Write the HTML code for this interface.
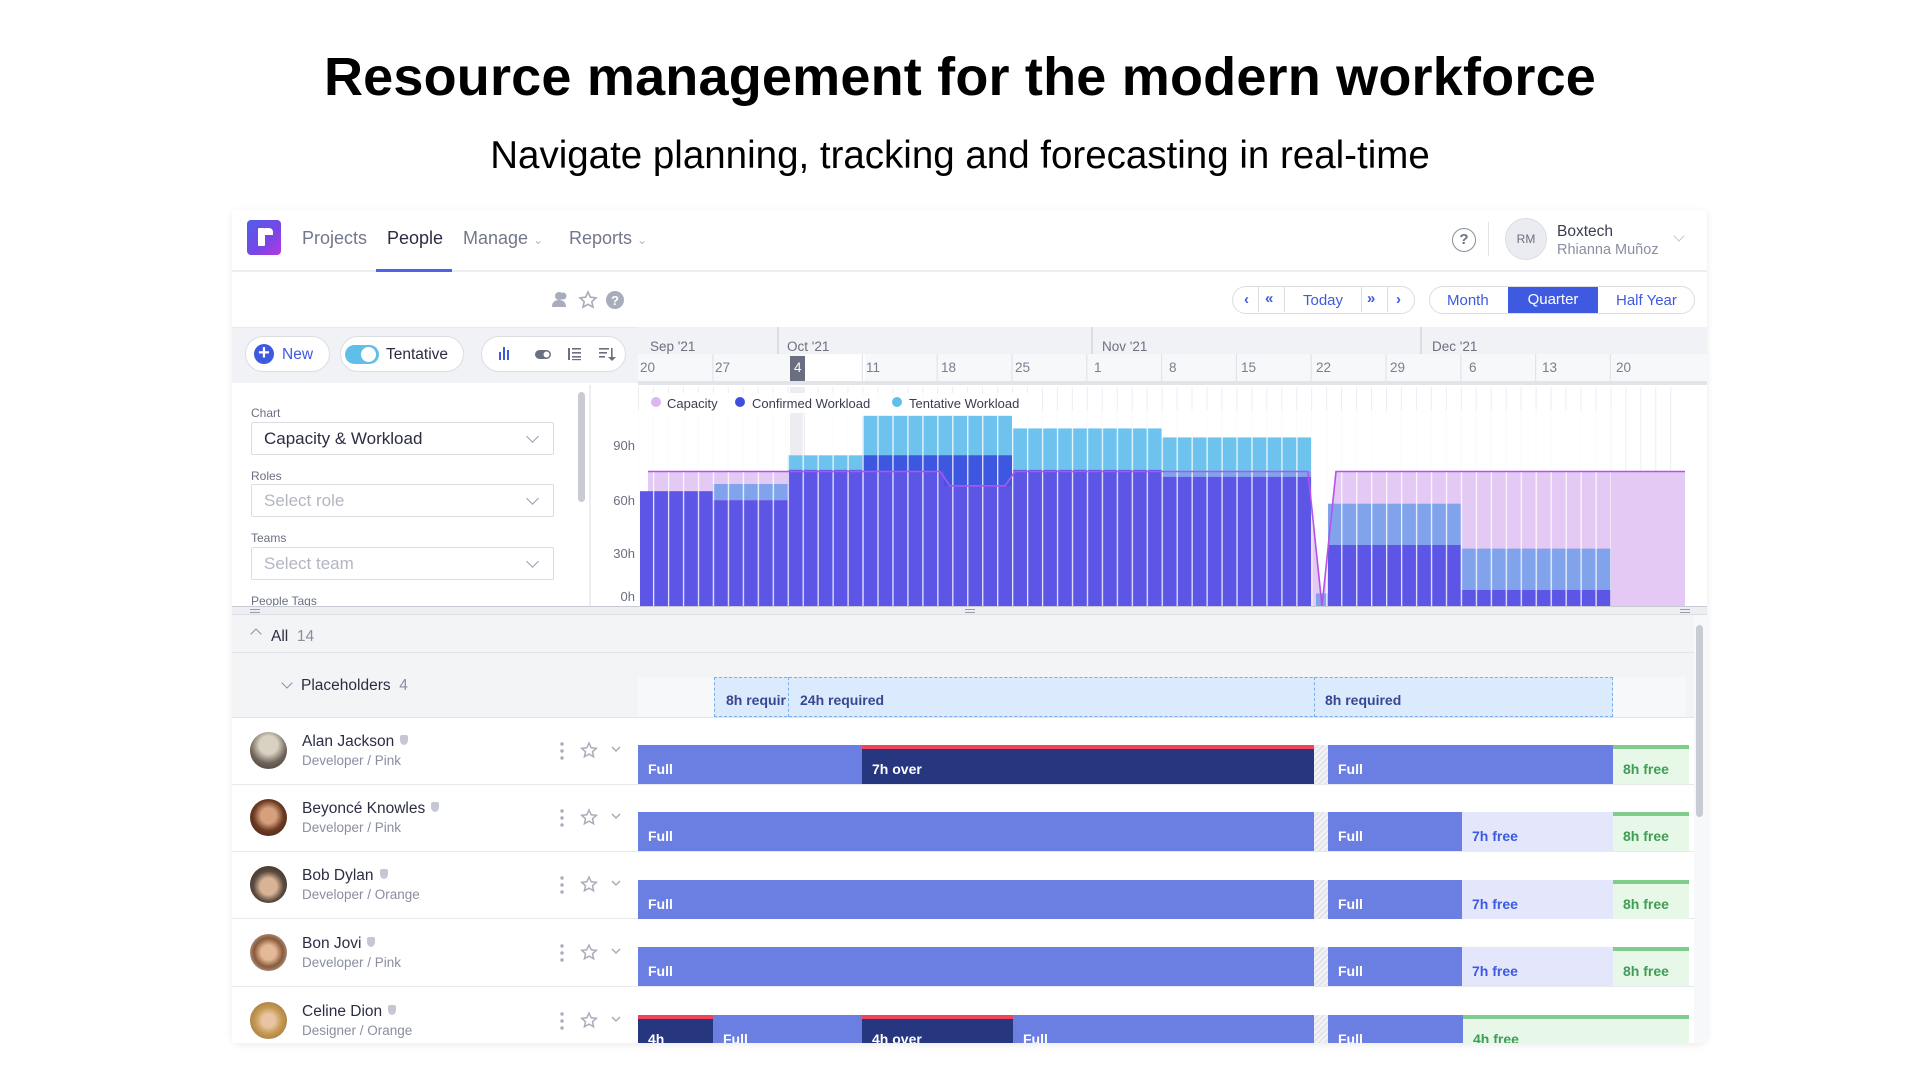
<!DOCTYPE html>
<html><head><meta charset="utf-8"><style>
*{box-sizing:border-box;margin:0;padding:0}
body{width:1920px;height:1080px;background:#fff;font-family:"Liberation Sans",sans-serif;position:relative;overflow:hidden;color:#2b2d42}
.a{position:absolute;white-space:nowrap}
.nav{font-size:18px;color:#737789;top:228px}
.sel{position:absolute;left:251px;width:303px;height:33px;border:1.5px solid #dcdde3;border-radius:2px;background:#fff;font-size:17px;padding:6px 12px;color:#2b2d42}
.sel.ph{color:#b3b6c2}
.sel:after{content:"";position:absolute;right:16px;top:9px;width:8px;height:8px;border-right:1.5px solid #9a9db0;border-bottom:1.5px solid #9a9db0;transform:rotate(45deg)}
.lbl{font-size:12px;color:#6b6f80}
.wk{font-size:13.5px;color:#7a7e90;top:360px}
.mo{font-size:13.5px;color:#6b6f80;top:339px}
.row{position:absolute;left:232px;width:1462px;height:67px;background:#fff;border-bottom:1.5px solid #e8e9ee}
.bar{position:absolute;height:39px;font-size:14px;font-weight:bold;color:#fff;padding:16px 0 0 10px;overflow:hidden}
.f{background:#6b7fe3}
.o{background:#27377f;border-top:4px solid #ef4459;padding-top:12px}
.fr{background:#e4e6fb;color:#3d5ae0}
.g{background:#e7f7e8;color:#3f9e55;border-top:4px solid #7fcc8d;padding-top:12px}
.hatch{background:repeating-linear-gradient(135deg,#f4f4f8 0 2px,#e3e4ea 2px 4px)}
.nm{font-size:15.5px;color:#2b2d42}
.rl{font-size:13.5px;color:#8a8ea0}
.av{position:absolute;left:18px;top:14px;width:37px;height:37px;border-radius:50%}
.tag{display:inline-block;width:8px;height:10px;background:#c5c8d4;border-radius:2px 2px 50% 50%;margin-left:6px;vertical-align:1px}
</style></head><body>

<div class="a" style="left:0;width:1920px;text-align:center;top:46px;font-size:54px;font-weight:bold;color:#000;letter-spacing:0.2px">Resource management for the modern workforce</div>
<div class="a" style="left:0;width:1920px;text-align:center;top:134px;font-size:38.5px;color:#000">Navigate planning, tracking and forecasting in real-time</div>

<div class="a" style="left:232px;top:210px;width:1475px;height:833px;background:#fff;border-radius:0 0 8px 8px;box-shadow:0 2px 8px rgba(0,0,0,.08);overflow:hidden"></div>

<div class="a" style="left:247px;top:220px;width:34px;height:35px;border-radius:4px;background:linear-gradient(135deg,#4f5fe8,#7a45e6 60%,#b33be0)"></div>
<div class="a" style="left:258px;top:228px;width:7px;height:18px;background:#fff;border-radius:1px"></div>
<div class="a" style="left:265px;top:228px;width:8px;height:7px;background:#fff;border-radius:0 4px 0 0"></div>
<div class="a nav" style="left:302px">Projects</div>
<div class="a nav" style="left:387px;color:#2b2d42">People</div>
<div class="a nav" style="left:463px">Manage <span style="font-size:12px;color:#b3b6c2">&#8964;</span></div>
<div class="a nav" style="left:569px">Reports <span style="font-size:12px;color:#b3b6c2">&#8964;</span></div>
<div class="a" style="left:232px;top:270px;width:1475px;height:2px;background:#eceef2"></div>
<div class="a" style="left:376px;top:269px;width:76px;height:3px;background:#4f63e6"></div>
<div class="a" style="left:1452px;top:228px;width:24px;height:24px;border:1.8px solid #8a8ea0;border-radius:50%;font-size:15px;color:#6b6f80;text-align:center;line-height:21px;font-weight:bold">?</div>
<div class="a" style="left:1488px;top:222px;width:1px;height:34px;background:#e3e4ea"></div>
<div class="a" style="left:1505px;top:218px;width:42px;height:42px;border-radius:50%;background:#ebecf1;border:1px solid #dcdde3;font-size:12px;color:#6b6f80;text-align:center;line-height:40px">RM</div>
<div class="a" style="left:1557px;top:223px;font-size:15.5px;color:#3a3d50">Boxtech</div>
<div class="a" style="left:1557px;top:242px;font-size:14.5px;color:#8a8ea0">Rhianna Muñoz</div>
<div class="a" style="left:1675px;top:232px;width:8px;height:8px;border-right:1.5px solid #c5c8d4;border-bottom:1.5px solid #c5c8d4;transform:rotate(45deg)"></div>

<svg class="a" style="left:550px;top:290px" width="80" height="20" viewBox="0 0 80 20">
<circle cx="9" cy="6" r="4" fill="#a9acba"/><path d="M2 17c0-5 3-7 7-7s7 2 7 7z" fill="#a9acba"/><circle cx="13" cy="6" r="3.5" fill="#a9acba"/>
<path d="M38 2l2.4 5.2 5.6.6-4.2 3.8 1.2 5.6-5-2.9-5 2.9 1.2-5.6-4.2-3.8 5.6-.6z" fill="none" stroke="#a9acba" stroke-width="1.6"/>
<circle cx="65" cy="10" r="9" fill="#a9acba"/><text x="65" y="15" font-size="13" font-weight="bold" fill="#fff" text-anchor="middle" font-family="Liberation Sans">?</text>
</svg>
<div class="a" style="left:1232px;top:286px;width:183px;height:28px;border:1.5px solid #dcdde3;border-radius:14px;font-size:15px;color:#3d5ae0">
<span class="a" style="left:11px;top:4px;font-weight:bold">&#8249;</span>
<span class="a" style="left:25px;top:0;width:1px;height:25px;background:#dcdde3"></span>
<span class="a" style="left:32px;top:3px;font-weight:bold">&#171;</span>
<span class="a" style="left:51px;top:0;width:1px;height:25px;background:#dcdde3"></span>
<span class="a" style="left:70px;top:5px">Today</span>
<span class="a" style="left:128px;top:0;width:1px;height:25px;background:#dcdde3"></span>
<span class="a" style="left:134px;top:3px;font-weight:bold">&#187;</span>
<span class="a" style="left:154px;top:0;width:1px;height:25px;background:#dcdde3"></span>
<span class="a" style="left:163px;top:4px;font-weight:bold">&#8250;</span>
</div>
<div class="a" style="left:1429px;top:286px;width:266px;height:28px;border:1.5px solid #dcdde3;border-radius:14px;font-size:15px;color:#3d5ae0;overflow:hidden">
<span class="a" style="left:17px;top:5px">Month</span>
<span class="a" style="left:78px;top:-1px;width:90px;height:28px;background:#3d5ae0;color:#fff;text-align:center;line-height:28px">Quarter</span>
<span class="a" style="left:186px;top:5px">Half Year</span>
</div>

<div class="a" style="left:232px;top:327px;width:1475px;height:56px;background:#f1f2f5;border-top:1.5px solid #e8e9ee"></div>
<div class="a" style="left:245px;top:336px;width:85px;height:36px;border:1.5px solid #dcdde3;border-radius:18px;background:#fff;font-size:15.5px;color:#3d5ae0">
<span class="a" style="left:8px;top:7px;width:20px;height:20px;border-radius:50%;background:#3d5ae0;color:#fff;text-align:center;line-height:19px;font-size:20px;font-weight:bold">+</span>
<span class="a" style="left:36px;top:9px">New</span></div>
<div class="a" style="left:340px;top:336px;width:124px;height:36px;border:1.5px solid #dcdde3;border-radius:18px;background:#fff;font-size:15.5px;color:#2b2d42">
<span class="a" style="left:4px;top:8px;width:34px;height:19px;border-radius:10px;background:#5fbfe9"></span>
<span class="a" style="left:20px;top:10px;width:15px;height:15px;border-radius:50%;background:#fff"></span>
<span class="a" style="left:45px;top:9px">Tentative</span></div>
<div class="a" style="left:481px;top:336px;width:145px;height:36px;border:1.5px solid #dcdde3;border-radius:18px;background:#fff">
<svg class="a" style="left:16px;top:9px" width="120" height="16" viewBox="0 0 120 16">
<rect x="1" y="6" width="2" height="8" fill="#3d5ae0"/><rect x="5" y="1" width="2" height="13" fill="#3d5ae0"/><rect x="9" y="4" width="2" height="10" fill="#3d5ae0"/>
<rect x="37" y="4" width="16" height="9" rx="4.5" fill="#6b6f80"/><circle cx="48.5" cy="8.5" r="3" fill="#fff"/>
<g fill="#6b6f80"><rect x="70" y="2" width="2" height="12"/><rect x="74" y="2" width="9" height="1.6"/><rect x="74" y="6" width="9" height="1.6"/><rect x="74" y="10" width="9" height="1.6"/><rect x="74" y="13" width="9" height="1.2"/>
<rect x="101" y="2" width="10" height="1.6"/><rect x="101" y="6" width="8" height="1.6"/><rect x="101" y="10" width="6" height="1.6"/><rect x="113" y="2" width="1.6" height="12"/><path d="M110 11l4 4 4-4z"/></g>
</svg></div>

<div class="a" style="left:638px;top:327px;width:1069px;height:27px;background:#f1f2f5"></div>
<div class="a" style="left:638px;top:354px;width:1069px;height:27px;background:#f7f8fa"></div>
<div class="a" style="left:805px;top:354px;width:60px;height:27px;background:#fff"></div>
<div class="a" style="left:638px;top:381px;width:1069px;height:4px;background:#e3e4ea"></div>
<div class="a" style="left:777px;top:327px;width:1.5px;height:27px;background:#dcdde3"></div>
<div class="a" style="left:1091px;top:327px;width:1.5px;height:27px;background:#dcdde3"></div>
<div class="a" style="left:1420px;top:327px;width:1.5px;height:27px;background:#dcdde3"></div>
<div class="a mo" style="left:650px">Sep '21</div>
<div class="a mo" style="left:787px">Oct '21</div>
<div class="a mo" style="left:1102px">Nov '21</div>
<div class="a mo" style="left:1432px">Dec '21</div>
<div class="a" style="left:790px;top:356px;width:15px;height:25px;background:#6b6d80"></div>
<div class="a wk" style="left:640px">20</div><div class="a wk" style="left:715px">27</div><div class="a wk" style="left:794px;color:#fff">4</div><div class="a wk" style="left:866px">11</div><div class="a wk" style="left:941px">18</div><div class="a wk" style="left:1015px">25</div><div class="a wk" style="left:1094px">1</div><div class="a wk" style="left:1169px">8</div><div class="a wk" style="left:1241px">15</div><div class="a wk" style="left:1316px">22</div><div class="a wk" style="left:1390px">29</div><div class="a wk" style="left:1469px">6</div><div class="a wk" style="left:1542px">13</div><div class="a wk" style="left:1616px">20</div>
<svg class="a" style="left:0;top:354px" width="1707" height="27"><g stroke="#e3e4ea" stroke-width="1.2">
<line x1="712.8" y1="0" x2="712.8" y2="27"/><line x1="862.4" y1="0" x2="862.4" y2="27"/><line x1="937.2" y1="0" x2="937.2" y2="27"/><line x1="1012" y1="0" x2="1012" y2="27"/><line x1="1086.8" y1="0" x2="1086.8" y2="27"/><line x1="1161.6" y1="0" x2="1161.6" y2="27"/><line x1="1236.4" y1="0" x2="1236.4" y2="27"/><line x1="1311.2" y1="0" x2="1311.2" y2="27"/><line x1="1386" y1="0" x2="1386" y2="27"/><line x1="1460.8" y1="0" x2="1460.8" y2="27"/><line x1="1535.6" y1="0" x2="1535.6" y2="27"/><line x1="1610.4" y1="0" x2="1610.4" y2="27"/></g></svg>

<div class="a" style="left:232px;top:385px;width:359px;height:222px;background:#fff"></div>
<div class="a lbl" style="left:251px;top:406px">Chart</div>
<div class="sel" style="top:422px">Capacity &amp; Workload</div>
<div class="a lbl" style="left:251px;top:469px">Roles</div>
<div class="sel ph" style="top:484px">Select role</div>
<div class="a lbl" style="left:251px;top:531px">Teams</div>
<div class="sel ph" style="top:547px">Select team</div>
<div class="a lbl" style="left:251px;top:594px">People Tags</div>
<div class="a" style="left:578px;top:392px;width:7px;height:110px;border-radius:4px;background:#c9cbd4"></div>
<div class="a" style="left:589px;top:385px;width:2px;height:222px;background:#eceef2"></div>

<svg class="a" style="left:0;top:0" width="1707" height="615" viewBox="0 0 1707 615">
<defs>
<pattern id="gl" x="638" y="0" width="14.96" height="10" patternUnits="userSpaceOnUse"><rect x="0" y="0" width="1" height="10" fill="#ecedf2"/></pattern>
<pattern id="wl" x="638" y="0" width="14.96" height="10" patternUnits="userSpaceOnUse"><rect x="0" y="0" width="1.3" height="10" fill="#fff" opacity=".85"/></pattern>
</defs>
<rect x="591" y="385" width="1116" height="222" fill="#fff"/>
<rect x="638" y="387" width="1047" height="219" fill="url(#gl)"/>
<rect x="790" y="387" width="15" height="219" fill="#ececf1"/>
<polygon points="648,471.5 940,471.5 950,485.8 1005,485.8 1015,471.5 1308,471.5 1322,606 1336,471.5 1685,471.5 1685,606 648,606" fill="#e3c9f3"/>
<g>
<rect x="640" y="491.2" width="72.8" height="114.8" fill="#5c55e5"/>
<rect x="712.8" y="484" width="74.8" height="16.2" fill="#80a3ec"/><rect x="712.8" y="500.2" width="74.8" height="105.8" fill="#5c55e5"/>
<rect x="787.6" y="455.3" width="74.8" height="14.4" fill="#6ec3ee"/><rect x="787.6" y="469.7" width="74.8" height="136.3" fill="#5c55e5"/>
<rect x="862.4" y="415.8" width="149.6" height="39.5" fill="#6ec3ee"/><rect x="862.4" y="455.3" width="149.6" height="150.7" fill="#5c55e5"/>
<rect x="862.4" y="455.3" width="82" height="16.2" fill="#3e57e0"/><rect x="944" y="455.3" width="68" height="30.5" fill="#3e57e0"/>
<rect x="1012" y="428.4" width="149.6" height="41.3" fill="#6ec3ee"/><rect x="1012" y="469.7" width="149.6" height="136.3" fill="#5c55e5"/>
<rect x="1161.6" y="437.4" width="149.6" height="34.1" fill="#6ec3ee"/><rect x="1161.6" y="471.5" width="149.6" height="5.3" fill="#80a3ec"/><rect x="1161.6" y="476.8" width="149.6" height="129.2" fill="#5c55e5"/>
<rect x="1316" y="593.4" width="12" height="12.6" fill="#80a3ec"/>
<rect x="1328" y="503.7" width="132.8" height="41.3" fill="#80a3ec"/><rect x="1328" y="545" width="132.8" height="61" fill="#5c55e5"/>
<rect x="1460.8" y="548.6" width="149.6" height="41.3" fill="#80a3ec"/><rect x="1460.8" y="589.9" width="149.6" height="16.1" fill="#5c55e5"/>
</g>
<rect x="638" y="410" width="973" height="196" fill="url(#wl)"/>
<polyline points="648,471.5 940,471.5 950,485.8 1005,485.8 1015,471.5 1308,471.5 1322,606 1336,471.5 1685,471.5" fill="none" stroke="#b552ea" stroke-width="1.6"/>
<rect x="643" y="393" width="390" height="20" rx="3" fill="#fff" opacity=".9"/>
<circle cx="656" cy="402" r="5" fill="#dcb6f2"/><circle cx="740" cy="402" r="5" fill="#3e4fe0"/><circle cx="897" cy="402" r="5" fill="#5fbfe9"/>
<g font-family="Liberation Sans" font-size="13" fill="#3a3d50"><text x="667" y="408">Capacity</text><text x="752" y="408">Confirmed Workload</text><text x="909" y="408">Tentative Workload</text></g>
<g font-family="Liberation Sans" font-size="13" fill="#6b6f80" text-anchor="end"><text x="635" y="450">90h</text><text x="635" y="505">60h</text><text x="635" y="558">30h</text><text x="635" y="601">0h</text></g>
</svg>

<div class="a" style="left:232px;top:606px;width:1475px;height:9px;background:#eceef2;border-top:1.5px solid #c9cbd4;border-bottom:1px solid #dcdde3"></div>
<div class="a" style="left:250px;top:609px;width:10px;height:4px;border-top:1.5px solid #9a9db0;border-bottom:1.5px solid #9a9db0"></div>
<div class="a" style="left:965px;top:609px;width:10px;height:4px;border-top:1.5px solid #9a9db0;border-bottom:1.5px solid #9a9db0"></div>
<div class="a" style="left:1680px;top:609px;width:10px;height:4px;border-top:1.5px solid #9a9db0;border-bottom:1.5px solid #9a9db0"></div>

<div class="a" style="left:232px;top:615px;width:1462px;height:38px;background:#f3f4f6;border-bottom:1.5px solid #e3e4ea"></div>
<div class="a" style="left:252px;top:630px;width:8px;height:8px;border-left:1.5px solid #8a8ea0;border-top:1.5px solid #8a8ea0;transform:rotate(45deg)"></div>
<div class="a" style="left:271px;top:628px;font-size:15.5px"><span style="color:#2b2d42">All</span> <span style="color:#8a8ea0">&nbsp;14</span></div>
<div class="a" style="left:232px;top:653px;width:1462px;height:65px;background:#f3f4f6;border-bottom:1.5px solid #e3e4ea"></div>
<div class="a" style="left:638px;top:677px;width:1048px;height:40px;background:#f7f8fa"></div>
<div class="a" style="left:283px;top:679px;width:8px;height:8px;border-right:1.5px solid #8a8ea0;border-bottom:1.5px solid #8a8ea0;transform:rotate(45deg)"></div>
<div class="a" style="left:301px;top:677px;font-size:15.5px;color:#2b2d42">Placeholders <span style="color:#8a8ea0">&nbsp;4</span></div>
<div class="a" style="left:714px;top:677px;width:899px;height:40px;background:#dbeafd;border:1.5px dashed #78aeea"></div>
<div class="a" style="left:788px;top:677px;width:0;height:40px;border-left:1.5px dashed #78aeea"></div>
<div class="a" style="left:1314px;top:677px;width:0;height:40px;border-left:1.5px dashed #78aeea"></div>
<div class="a" style="left:726px;top:692px;font-size:14px;font-weight:bold;color:#3a4790;width:60px;overflow:hidden">8h required</div>
<div class="a" style="left:800px;top:692px;font-size:14px;font-weight:bold;color:#3a4790">24h required</div>
<div class="a" style="left:1325px;top:692px;font-size:14px;font-weight:bold;color:#3a4790">8h required</div>

<div class="row" style="top:718px">
<div class="av" style="background:radial-gradient(circle at 50% 35%,#d9d2c3 0 30%,#6e6458 60%,#3c3a3a)"></div>
<div class="a nm" style="left:70px;top:15px">Alan Jackson<span class="tag"></span></div>
<div class="a rl" style="left:70px;top:35px">Developer / Pink</div>
</div>
<div class="row" style="top:785px">
<div class="av" style="background:radial-gradient(circle at 50% 45%,#d6a07c 0 28%,#6b3a22 55%,#3a2016)"></div>
<div class="a nm" style="left:70px;top:15px">Beyoncé Knowles<span class="tag"></span></div>
<div class="a rl" style="left:70px;top:35px">Developer / Pink</div>
</div>
<div class="row" style="top:852px">
<div class="av" style="background:radial-gradient(circle at 50% 55%,#d8b396 0 30%,#5b4a3e 55%,#2a2524)"></div>
<div class="a nm" style="left:70px;top:15px">Bob Dylan<span class="tag"></span></div>
<div class="a rl" style="left:70px;top:35px">Developer / Orange</div>
</div>
<div class="row" style="top:920px">
<div class="av" style="background:radial-gradient(circle at 50% 50%,#e3b999 0 28%,#8a5a3a 55%,#cfd6dc)"></div>
<div class="a nm" style="left:70px;top:15px">Bon Jovi<span class="tag"></span></div>
<div class="a rl" style="left:70px;top:35px">Developer / Pink</div>
</div>
<div class="row" style="top:988px;height:55px;border-bottom:none">
<div class="av" style="background:radial-gradient(circle at 50% 50%,#e8c4a4 0 25%,#c69a52 50%,#8a6a3a)"></div>
<div class="a nm" style="left:70px;top:15px">Celine Dion<span class="tag"></span></div>
<div class="a rl" style="left:70px;top:35px">Designer / Orange</div>
</div>

<svg class="a" style="left:550px;top:718px" width="80" height="330">
<g id="ic"><circle cx="12" cy="26" r="1.7" fill="#a9acba"/><circle cx="12" cy="33" r="1.7" fill="#a9acba"/><circle cx="12" cy="40" r="1.7" fill="#a9acba"/>
<path d="M39 25l2.2 4.8 5.1.5-3.8 3.4 1.1 5.1-4.6-2.7-4.6 2.7 1.1-5.1-3.8-3.4 5.1-.5z" fill="none" stroke="#a9acba" stroke-width="1.5"/>
<path d="M62 29l4 4 4-4" fill="none" stroke="#a9acba" stroke-width="1.5"/></g>
<use href="#ic" y="67"/><use href="#ic" y="134"/><use href="#ic" y="202"/><use href="#ic" y="270"/>
</svg>

<div class="bar f" style="left:638px;top:745px;width:224px">Full</div>
<div class="bar o" style="left:862px;top:745px;width:452px">7h over</div>
<div class="bar hatch" style="left:1314px;top:745px;width:14px"></div>
<div class="bar f" style="left:1328px;top:745px;width:285px">Full</div>
<div class="bar g" style="left:1613px;top:745px;width:76px">8h free</div>

<div class="bar f" style="left:638px;top:812px;width:676px">Full</div>
<div class="bar hatch" style="left:1314px;top:812px;width:14px"></div>
<div class="bar f" style="left:1328px;top:812px;width:134px">Full</div>
<div class="bar fr" style="left:1462px;top:812px;width:151px">7h free</div>
<div class="bar g" style="left:1613px;top:812px;width:76px">8h free</div>

<div class="bar f" style="left:638px;top:880px;width:676px">Full</div>
<div class="bar hatch" style="left:1314px;top:880px;width:14px"></div>
<div class="bar f" style="left:1328px;top:880px;width:134px">Full</div>
<div class="bar fr" style="left:1462px;top:880px;width:151px">7h free</div>
<div class="bar g" style="left:1613px;top:880px;width:76px">8h free</div>

<div class="bar f" style="left:638px;top:947px;width:676px">Full</div>
<div class="bar hatch" style="left:1314px;top:947px;width:14px"></div>
<div class="bar f" style="left:1328px;top:947px;width:134px">Full</div>
<div class="bar fr" style="left:1462px;top:947px;width:151px">7h free</div>
<div class="bar g" style="left:1613px;top:947px;width:76px">8h free</div>

<div class="bar o" style="left:638px;top:1015px;width:75px;height:28px">4h</div>
<div class="bar f" style="left:713px;top:1015px;width:149px;height:28px;padding-top:16px">Full</div>
<div class="bar o" style="left:862px;top:1015px;width:151px;height:28px">4h over</div>
<div class="bar f" style="left:1013px;top:1015px;width:301px;height:28px">Full</div>
<div class="bar hatch" style="left:1314px;top:1015px;width:14px;height:28px"></div>
<div class="bar f" style="left:1328px;top:1015px;width:135px;height:28px">Full</div>
<div class="bar g" style="left:1463px;top:1015px;width:226px;height:28px">4h free</div>

<div class="a" style="left:1694px;top:615px;width:13px;height:428px;background:#f7f8fa"></div>
<div class="a" style="left:1696px;top:625px;width:7px;height:192px;border-radius:4px;background:#c9cbd4"></div>
</body></html>
